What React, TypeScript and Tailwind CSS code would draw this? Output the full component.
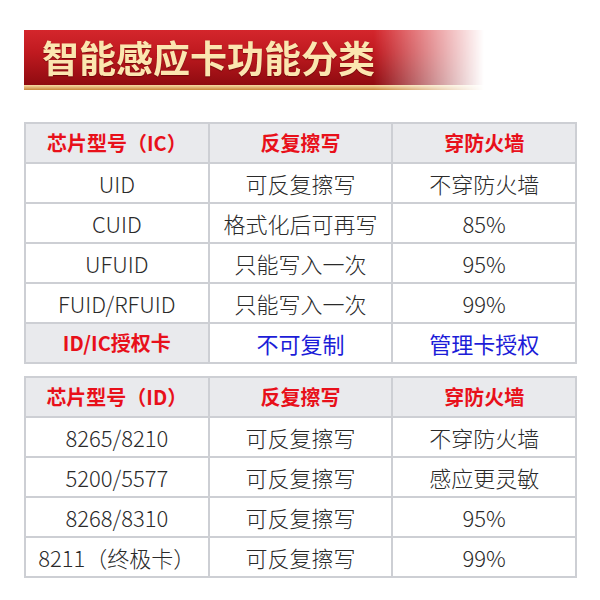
const cjk = "font-['Noto_Sans_CJK_SC','Noto_Sans',sans-serif]";

type Row = [string, string, string];

const icRows: Row[] = [
  ["UID", "可反复擦写", "不穿防火墙"],
  ["CUID", "格式化后可再写", "85%"],
  ["UFUID", "只能写入一次", "95%"],
  ["FUID/RFUID", "只能写入一次", "99%"],
];

const idRows: Row[] = [
  ["8265/8210", "可反复擦写", "不穿防火墙"],
  ["5200/5577", "可反复擦写", "感应更灵敏"],
  ["8268/8310", "可反复擦写", "95%"],
  ["8211（终极卡）", "可反复擦写", "99%"],
];

function HeadRow({ first }: { first: string }) {
  const cell = "h-10 border-2 border-[#cdcfd4] bg-[#e9eaed] text-center text-[20px] font-bold text-[#e8101a]";
  return (
    <tr>
      <th className={cell}>{first}</th>
      <th className={cell}>反复擦写</th>
      <th className={cell}>穿防火墙</th>
    </tr>
  );
}

function BodyRow({ row }: { row: Row }) {
  const cell = "h-10 border-2 border-[#cdcfd4] bg-white text-center text-[22px] font-light text-[#2a2a2a]";
  return (
    <tr>
      {row.map((v, i) => (
        <td key={i} className={cell}>
          {v}
        </td>
      ))}
    </tr>
  );
}

export default function App() {
  return (
    <div className={`w-[600px] h-[600px] bg-white ${cjk} overflow-hidden`}>
      <div className="pt-[30px] pl-[24px]">
        <div className="w-[460px] h-[60px]">
          <div className="h-[55px] bg-[linear-gradient(to_bottom,#d4262c_0%,#c01a20_40%,#8f0b10_100%)] [mask-image:linear-gradient(to_right,black_76%,transparent_100%)] flex items-center pl-[18px]">
            <span className="text-[37px] font-bold leading-none text-[#fbe6b0] [text-shadow:0_1px_1px_rgba(80,0,0,0.6)]">
              智能感应卡功能分类
            </span>
          </div>
          <div className="h-[5px] bg-[linear-gradient(to_bottom,#f7dca6,#c9883c)] [mask-image:linear-gradient(to_right,black_76%,transparent_100%)]" />
        </div>
      </div>

      <div className="pl-[24px] pt-[32px]">
        <table className="w-[553px] table-fixed border-collapse">
          <thead>
            <HeadRow first="芯片型号（IC）" />
          </thead>
          <tbody>
            {icRows.map((r, i) => (
              <BodyRow key={i} row={r} />
            ))}
            <tr>
              <td className="h-10 border-2 border-[#cdcfd4] bg-[#e9eaed] text-center text-[20px] font-bold text-[#e8101a]">
                ID/IC授权卡
              </td>
              <td className="h-10 border-2 border-[#cdcfd4] bg-white text-center text-[22px] text-[#1c1cd8]">
                不可复制
              </td>
              <td className="h-10 border-2 border-[#cdcfd4] bg-white text-center text-[22px] text-[#1c1cd8]">
                管理卡授权
              </td>
            </tr>
          </tbody>
        </table>

        <table className="mt-[12px] w-[553px] table-fixed border-collapse">
          <thead>
            <HeadRow first="芯片型号（ID）" />
          </thead>
          <tbody>
            {idRows.map((r, i) => (
              <BodyRow key={i} row={r} />
            ))}
          </tbody>
        </table>
      </div>
    </div>
  );
}
